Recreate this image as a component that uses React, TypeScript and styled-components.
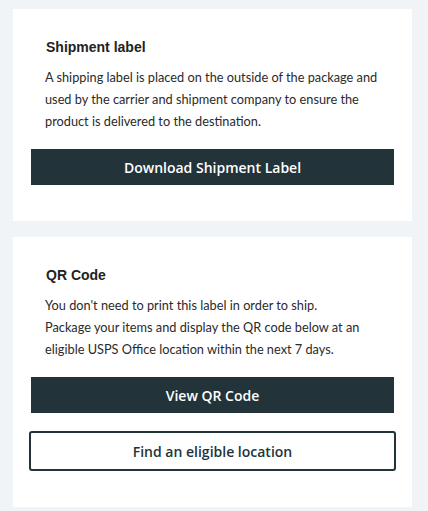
import React from "react";
import styled, { createGlobalStyle } from "styled-components";

const Global = createGlobalStyle`
  html, body { margin: 0; padding: 0; background: #f1f4f7; }
  * { box-sizing: border-box; }
`;

const Page = styled.div`
  display: flex;
  flex-direction: column;
  gap: 16px;
  padding: 9px 16px 8px 13px;
  background: #f1f4f7;
  min-height: 511px;
`;

const Card = styled.section`
  background: #ffffff;
  padding: 30px 18px 36px 18px;
  display: flex;
  flex-direction: column;
`;

const Title = styled.h2`
  margin: 0 0 11px 0;
  padding-left: 15px;
  font-family: "Liberation Sans", Arial, sans-serif;
  font-weight: 700;
  font-size: 14px;
  line-height: 16px;
  color: #222222;
`;

const Body = styled.p`
  margin: 0 0 17px 0;
  padding-left: 14px;
  font-family: Lato, "Open Sans", sans-serif;
  font-size: 12.75px;
  line-height: 22px;
  color: #2a2a2a;
`;

const Buttons = styled.div`
  display: flex;
  flex-direction: column;
  gap: 18px;
`;

const Button = styled.button<{ $variant?: "solid" | "outline" }>`
  display: flex;
  align-items: center;
  justify-content: center;
  height: ${(p) => (p.$variant === "outline" ? "40px" : "36px")};
  margin: ${(p) => (p.$variant === "outline" ? "0 -2px" : "0")};
  font-family: "Open Sans", Lato, sans-serif;
  font-weight: 600;
  font-size: 14px;
  border-radius: ${(p) => (p.$variant === "outline" ? "3px" : "0")};
  border: ${(p) => (p.$variant === "outline" ? "2px solid #22333a" : "none")};
  background: ${(p) => (p.$variant === "outline" ? "#ffffff" : "#22333a")};
  color: ${(p) => (p.$variant === "outline" ? "#22333a" : "#ffffff")};
  cursor: pointer;
`;

export default function App() {
  return (
    <>
      <Global />
      <Page>
        <Card>
          <Title>Shipment label</Title>
          <Body>
            A shipping label is placed on the outside of the package and used by the carrier and
            shipment company to ensure the product is delivered to the destination.
          </Body>
          <Buttons>
            <Button>Download Shipment Label</Button>
          </Buttons>
        </Card>
        <Card>
          <Title>QR Code</Title>
          <Body>
            You don't need to print this label in order to ship.
            <br />
            Package your items and display the QR code below at an eligible USPS Office location
            within the next 7 days.
          </Body>
          <Buttons>
            <Button>View QR Code</Button>
            <Button $variant="outline">Find an eligible location</Button>
          </Buttons>
        </Card>
      </Page>
    </>
  );
}
